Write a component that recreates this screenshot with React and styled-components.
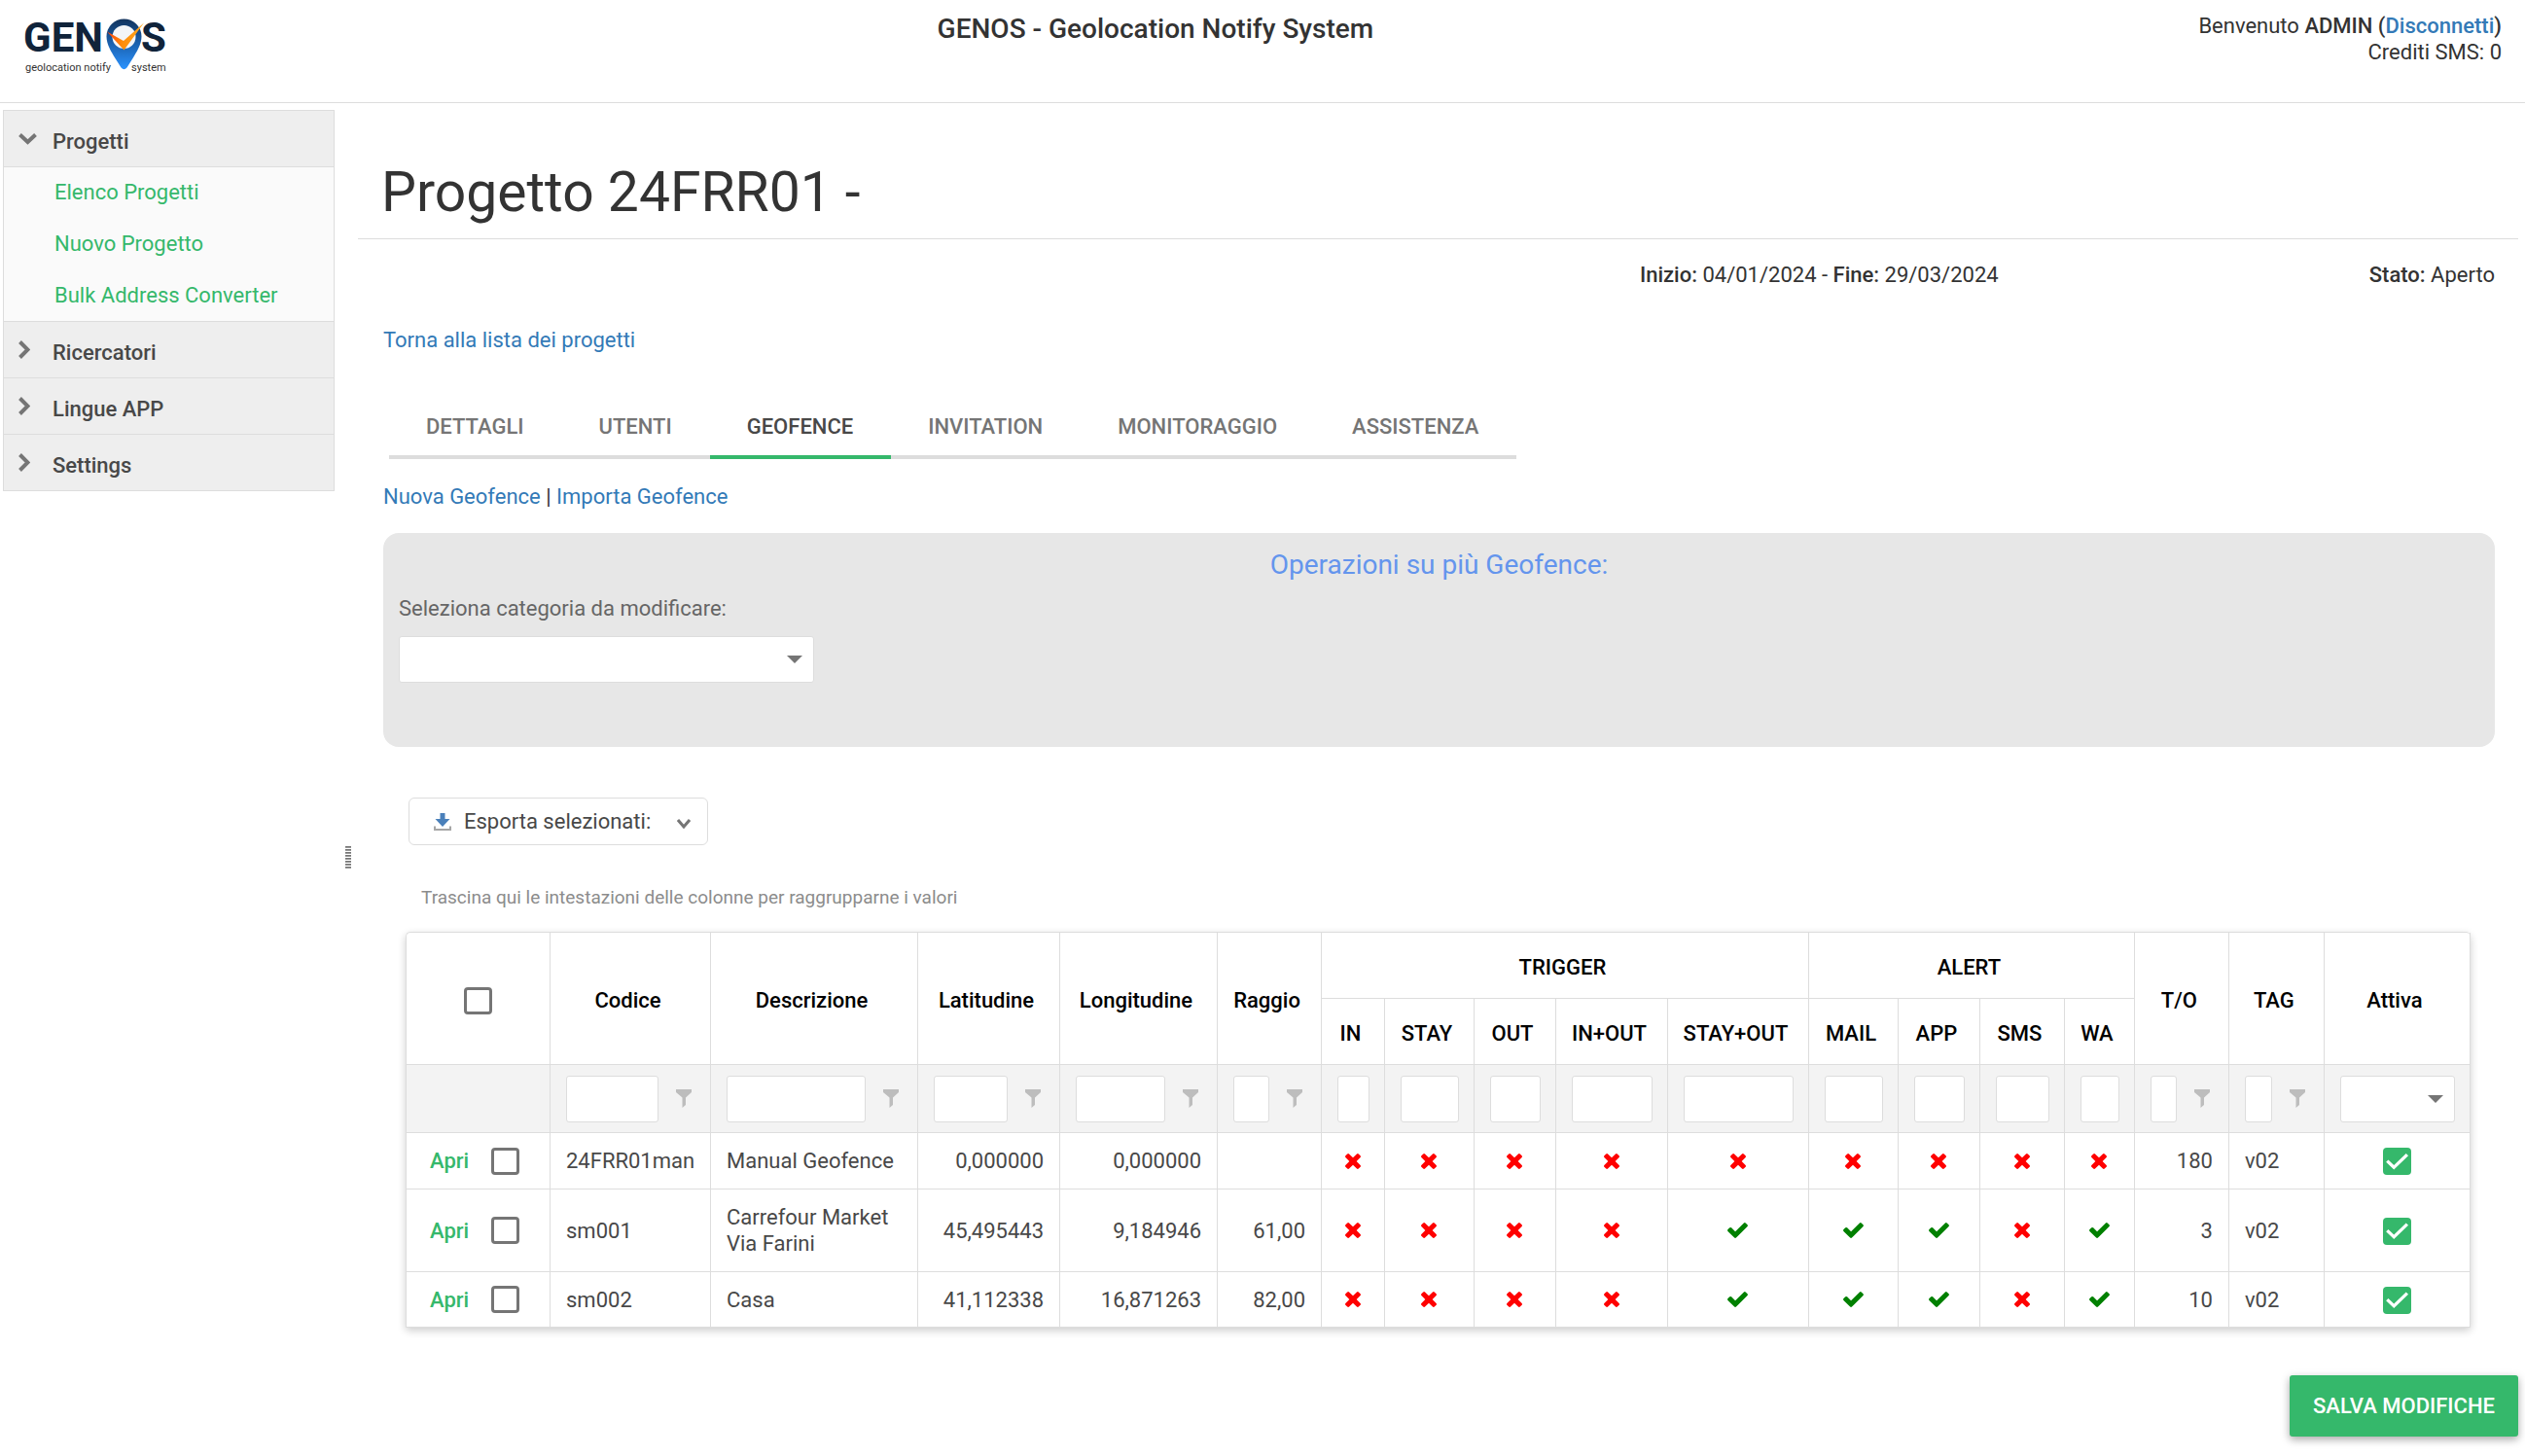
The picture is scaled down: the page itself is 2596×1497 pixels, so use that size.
import React, { useState } from "react";
import styled, { createGlobalStyle } from "styled-components";

const menu = [
  {
    title: "Progetti",
    items: ["Elenco Progetti", "Nuovo Progetto", "Bulk Address Converter"],
  },
  { title: "Ricercatori", items: [] },
  { title: "Lingue APP", items: [] },
  { title: "Settings", items: [] },
];

const tabs = [
  "DETTAGLI",
  "UTENTI",
  "GEOFENCE",
  "INVITATION",
  "MONITORAGGIO",
  "ASSISTENZA",
];

const colWidths = [
  148, 165, 213, 146, 162, 107, 65, 92, 84, 115, 145, 92, 84, 87, 72, 97, 98,
  150,
];

const triggers = ["IN", "STAY", "OUT", "IN+OUT", "STAY+OUT"];
const alerts = ["MAIL", "APP", "SMS", "WA"];

const filters = [
  { label: "Codice", funnel: true },
  { label: "Descrizione", funnel: true },
  { label: "Latitudine", funnel: true },
  { label: "Longitudine", funnel: true },
  { label: "Raggio", funnel: true },
  ...[...triggers, ...alerts].map((label) => ({ label })),
  { label: "T/O", funnel: true },
  { label: "TAG", funnel: true },
];

const geofences = [
  {
    code: "24FRR01man",
    description: "Manual Geofence",
    lat: "0,000000",
    lng: "0,000000",
    radius: "",
    flags: [0, 0, 0, 0, 0, 0, 0, 0, 0],
    timeout: 180,
    tag: "v02",
    height: 58,
  },
  {
    code: "sm001",
    description: "Carrefour Market Via Farini",
    lat: "45,495443",
    lng: "9,184946",
    radius: "61,00",
    flags: [0, 0, 0, 0, 1, 1, 1, 0, 1],
    timeout: 3,
    tag: "v02",
    height: 85,
  },
  {
    code: "sm002",
    description: "Casa",
    lat: "41,112338",
    lng: "16,871263",
    radius: "82,00",
    flags: [0, 0, 0, 0, 1, 1, 1, 0, 1],
    timeout: 10,
    tag: "v02",
    height: 57,
  },
];

const Logo = () => (
  <LogoSvg width="150" height="62" viewBox="0 0 150 62" role="img" aria-label="GENOS">
    <defs>
      <linearGradient id="pin" x1="0" y1="0" x2="0" y2="1">
        <stop offset="0" stopColor="#12335c" />
        <stop offset="0.5" stopColor="#1b62b0" />
        <stop offset="1" stopColor="#2b93ff" />
      </linearGradient>
      <linearGradient id="tick" x1="0" y1="0" x2="1" y2="0">
        <stop offset="0" stopColor="#ff3d0c" />
        <stop offset="0.4" stopColor="#ff8c0a" />
        <stop offset="1" stopColor="#ffa81f" />
      </linearGradient>
    </defs>
    <LogoName x="0" y="34">GEN</LogoName>
    <LogoName x="121" y="34">S</LogoName>
    <LogoTag x="2" y="54">geolocation notify</LogoTag>
    <LogoTag x="111" y="54">system</LogoTag>
    <path
      d="M103.500 0.500a18 18 0 0 1 18 18c0 8-5 16-9 22.500l-6 9.500q-3 3.500-6 0l-6-9.500c-4-6.500-9-14.500-9-22.500a18 18 0 0 1 18-18z"
      fill="url(#pin)"
    />
    <circle cx="103.500" cy="19" r="12" fill="#f3f5f8" />
    <path d="M86 13.500l17 9.500 21-18.500-20.500 28z" fill="url(#tick)" />
  </LogoSvg>
);

const Chevron = ({ open }) =>
  open ? (
    <svg width="19" height="12" viewBox="0 0 19 12">
      <path d="M1.500 1.500l8 7.500 8-7.500" fill="none" stroke="#757575" strokeWidth="4" />
    </svg>
  ) : (
    <svg width="12" height="19" viewBox="0 0 12 19">
      <path d="M1.500 1.500l8 8-8 8" fill="none" stroke="#757575" strokeWidth="4" />
    </svg>
  );

const Funnel = () => (
  <svg width="16" height="19" viewBox="0 0 16 19">
    <path d="M0 0h16v3l-6 5.500v7.500l-3.500 3v-10.500l-6.500-5.500z" fill="#bdbdbd" />
  </svg>
);

const Flag = ({ on }) =>
  on ? (
    <svg width="21" height="16" viewBox="121 334 1550 1188" role="img" aria-label="Sì">
      <path
        fill="#008000"
        d="M1671 566q0 40-28 68l-724 724-136 136q-28 28-68 28t-68-28l-136-136-362-362q-28-28-28-68t28-68l136-136q28-28 68-28t68 28l294 295 656-657q28-28 68-28t68 28l136 136q28 28 28 68z"
      />
    </svg>
  ) : (
    <svg width="16" height="16" viewBox="302 366 1188 1188" role="img" aria-label="No">
      <path
        fill="#ff0000"
        d="M1490 1322q0 40-28 68l-136 136q-28 28-68 28t-68-28l-294-294-294 294q-28 28-68 28t-68-28l-136-136q-28-28-28-68t28-68l294-294-294-294q-28-28-28-68t28-68l136-136q28-28 68-28t68 28l294 294 294-294q28-28 68-28t68 28l136 136q28 28 28 68t-28 68l-294 294 294 294q28 28 28 68z"
      />
    </svg>
  );

const DownloadIcon = () => (
  <svg width="18" height="18" viewBox="0 0 18 18">
    <path d="M6.500 0h5v6h5l-7.500 8-7.500-8h5z" fill="#4a80ba" />
    <path d="M1 13.500v3.500h16v-3.500" fill="none" stroke="#a6a6a6" strokeWidth="2" />
  </svg>
);

const App = () => {
  const [openGroup, setOpenGroup] = useState("Progetti");
  const [tab, setTab] = useState("GEOFENCE");
  const [selected, setSelected] = useState([]);

  const toggleAll = (e) =>
    setSelected(e.target.checked ? geofences.map((g) => g.code) : []);

  const toggleRow = (code) =>
    setSelected(
      selected.includes(code)
        ? selected.filter((c) => c !== code)
        : [...selected, code]
    );

  return (
    <>
      <GlobalStyle />
      <Header>
        <Logo />
        <HeaderTitle>GENOS - Geolocation Notify System</HeaderTitle>
        <UserInfo>
          <div>
            Benvenuto{" "}
            <b>
              ADMIN (<Link href="#logout">Disconnetti</Link>)
            </b>
          </div>
          <div>Crediti SMS: 0</div>
        </UserInfo>
      </Header>
      <Layout>
        <Sidebar>
          {menu.map(({ title, items }) => (
            <div key={title}>
              <GroupButton onClick={() => setOpenGroup(title)}>
                <ChevronBox>
                  <Chevron open={openGroup === title} />
                </ChevronBox>
                <span>{title}</span>
              </GroupButton>
              {openGroup === title && items.length > 0 && (
                <SubMenu>
                  {items.map((item) => (
                    <SubLink key={item} href="#menu">
                      {item}
                    </SubLink>
                  ))}
                </SubMenu>
              )}
            </div>
          ))}
        </Sidebar>
        <Splitter>
          <Grip />
        </Splitter>
        <Main>
          <Title>Progetto 24FRR01 -</Title>
          <Content>
            <ProjectInfo>
              <Dates>
                <b>Inizio:</b> 04/01/2024 - <b>Fine:</b> 29/03/2024
              </Dates>
              <Status>
                <b>Stato:</b> Aperto
              </Status>
            </ProjectInfo>
            <BackRow>
              <Link href="#progetti">Torna alla lista dei progetti</Link>
            </BackRow>
            <Tabs role="tablist">
              {tabs.map((name) => (
                <Tab
                  key={name}
                  role="tab"
                  $active={tab === name}
                  onClick={() => setTab(name)}
                >
                  {name}
                </Tab>
              ))}
            </Tabs>
            <Actions>
              <Link href="#nuova">Nuova Geofence</Link> |{" "}
              <Link href="#importa">Importa Geofence</Link>
            </Actions>
            <BulkPanel>
              <BulkTitle>Operazioni su più Geofence:</BulkTitle>
              <BulkLabel htmlFor="categoria">
                Seleziona categoria da modificare:
              </BulkLabel>
              <SelectBox $width="427px">
                <Select id="categoria" />
              </SelectBox>
            </BulkPanel>
            <GridArea>
              <ExportButton>
                <DownloadIcon />
                <span>Esporta selezionati:</span>
                <svg width="14" height="14" viewBox="0 0 14 14">
                  <path d="M1 5l6 7 6-7" fill="none" stroke="#757575" strokeWidth="3" />
                </svg>
              </ExportButton>
              <GroupHint>
                Trascina qui le intestazioni delle colonne per raggrupparne i
                valori
              </GroupHint>
              <Table>
                <colgroup>
                  {colWidths.map((w, i) => (
                    <col key={i} style={{ width: `${(w / 2122) * 100}%` }} />
                  ))}
                </colgroup>
                <thead>
                  <HeadRow>
                    <HeadCell rowSpan={2} $plain>
                      <Checkbox
                        aria-label="Seleziona tutti"
                        checked={selected.length === geofences.length}
                        onChange={toggleAll}
                      />
                    </HeadCell>
                    <HeadCell rowSpan={2}>Codice</HeadCell>
                    <HeadCell rowSpan={2}>Descrizione</HeadCell>
                    <HeadCell rowSpan={2}>Latitudine</HeadCell>
                    <HeadCell rowSpan={2}>Longitudine</HeadCell>
                    <HeadCell rowSpan={2}>Raggio</HeadCell>
                    <HeadCell colSpan={5}>TRIGGER</HeadCell>
                    <HeadCell colSpan={4}>ALERT</HeadCell>
                    <HeadCell rowSpan={2}>T/O</HeadCell>
                    <HeadCell rowSpan={2}>TAG</HeadCell>
                    <HeadCell rowSpan={2}>Attiva</HeadCell>
                  </HeadRow>
                  <HeadRow>
                    {[...triggers, ...alerts].map((name) => (
                      <HeadCell key={name}>{name}</HeadCell>
                    ))}
                  </HeadRow>
                  <FilterRow>
                    <FilterCell />
                    {filters.map(({ label, funnel }) => (
                      <FilterCell key={label}>
                        <FilterBox>
                          <FilterInput type="text" aria-label={`Filtro ${label}`} />
                          {funnel && <Funnel />}
                        </FilterBox>
                      </FilterCell>
                    ))}
                    <FilterCell>
                      <SelectBox $width="100%">
                        <Select aria-label="Filtro Attiva" />
                      </SelectBox>
                    </FilterCell>
                  </FilterRow>
                </thead>
                <tbody>
                  {geofences.map((g) => (
                    <BodyRow key={g.code} $height={g.height}>
                      <Cell>
                        <RowTools>
                          <OpenLink href="#apri">Apri</OpenLink>
                          <Checkbox
                            aria-label={`Seleziona ${g.code}`}
                            checked={selected.includes(g.code)}
                            onChange={() => toggleRow(g.code)}
                          />
                        </RowTools>
                      </Cell>
                      <Cell>{g.code}</Cell>
                      <Cell>{g.description}</Cell>
                      <Cell $align="right">{g.lat}</Cell>
                      <Cell $align="right">{g.lng}</Cell>
                      <Cell $align="right">{g.radius}</Cell>
                      {g.flags.map((on, i) => (
                        <Cell key={i} $align="center">
                          <Flag on={on} />
                        </Cell>
                      ))}
                      <Cell $align="right">{g.timeout}</Cell>
                      <Cell>{g.tag}</Cell>
                      <Cell $align="center">
                        <Checkbox aria-label={`Attiva ${g.code}`} defaultChecked />
                      </Cell>
                    </BodyRow>
                  ))}
                </tbody>
              </Table>
            </GridArea>
          </Content>
          <SaveButton>SALVA MODIFICHE</SaveButton>
        </Main>
      </Layout>
    </>
  );
};

// styled components

const GlobalStyle = createGlobalStyle`
  * {
    box-sizing: border-box;
  }
  body {
    margin: 0;
    background: #fff;
    color: #333;
    font-family: Roboto, "Liberation Sans", sans-serif;
    font-size: 22px;
    line-height: 27px;
  }
  button, input, select {
    font: inherit;
    color: inherit;
  }
  svg {
    display: block;
    flex: none;
  }
`;

const Header = styled.header`
  display: grid;
  grid-template-columns: 21fr 32fr 28fr;
  height: 106px;
  padding: 13px 24px;
  border-bottom: 1px solid #ddd;
`;

const LogoSvg = styled.svg`
  margin-top: 6px;
  overflow: visible;
`;

const LogoName = styled.text`
  font-family: Roboto, "Liberation Sans", sans-serif;
  font-size: 42px;
  font-weight: 700;
  fill: #10233a;
`;

const LogoTag = styled.text`
  font-family: Roboto, "Liberation Sans", sans-serif;
  font-size: 11px;
  fill: #333;
`;

const HeaderTitle = styled.div`
  font-size: 28px;
  line-height: 34px;
  font-weight: 500;
  text-align: center;
`;

const UserInfo = styled.div`
  text-align: right;
  b {
    font-weight: 500;
  }
`;

const Link = styled.a`
  color: #337ab7;
  text-decoration: none;
`;

const Layout = styled.div`
  display: grid;
  grid-template-columns: 341px 24px 1fr;
  padding: 0 7px 0 3px;
`;

const Sidebar = styled.nav`
  align-self: start;
  margin-top: 7px;
  border: 1px solid #ddd;
  border-bottom: 0;
`;

const GroupButton = styled.button`
  display: flex;
  align-items: center;
  width: 100%;
  height: 58px;
  padding: 0 15px;
  border: 0;
  border-bottom: 1px solid #ddd;
  background: #eee;
  color: #484848;
  font-weight: 500;
  text-align: left;
  span:last-child {
    padding-top: 6px;
  }
`;

const ChevronBox = styled.span`
  width: 35px;
`;

const SubMenu = styled.div`
  display: grid;
  gap: 1px;
  background: #fafafa;
  border-bottom: 1px solid #ddd;
`;

const SubLink = styled.a`
  padding-left: 52px;
  color: #35b86b;
  line-height: 52px;
  text-decoration: none;
`;

const Splitter = styled.div`
  padding: 764px 0 0 11px;
`;

const Grip = styled.div`
  width: 6px;
  height: 23px;
  background: repeating-linear-gradient(
    #757575 0 1px,
    #999 1px 2px,
    #fff 2px 3px
  );
`;

const Main = styled.main`
  display: flex;
  flex-direction: column;
  min-width: 0;
`;

const Title = styled.h1`
  margin: 0;
  padding: 60px 24px 15px;
  border-bottom: 1px solid #ddd;
  font-size: 57px;
  line-height: 64px;
  font-weight: 400;
`;

const Content = styled.div`
  padding: 0 24px 0 26px;
`;

const ProjectInfo = styled.div`
  display: grid;
  grid-template-columns: 50fr 36fr 14fr;
  line-height: 74px;
  b {
    font-weight: 500;
  }
`;

const Dates = styled.div`
  grid-column: 2;
  text-align: center;
`;

const Status = styled.div`
  text-align: right;
`;

const BackRow = styled.div`
  line-height: 60px;
`;

const Tabs = styled.div`
  display: flex;
  margin: 28px 0 0 6px;
`;

const Tab = styled.button`
  height: 64px;
  padding: 0 39px 0 38px;
  border: 0;
  border-bottom: 4px solid ${({ $active }) => ($active ? "#35b86b" : "#ddd")};
  background: none;
  color: ${({ $active }) => ($active ? "#484848" : "#757575")};
  font-weight: 500;
`;

const Actions = styled.div`
  padding-top: 2px;
  line-height: 74px;
`;

const BulkPanel = styled.section`
  padding: 16px 16px 66px;
  border-radius: 16px;
  background: #e7e7e7;
`;

const BulkTitle = styled.div`
  color: #6495ed;
  font-size: 28px;
  line-height: 34px;
  text-align: center;
`;

const BulkLabel = styled.label`
  display: block;
  color: #666;
  line-height: 56px;
`;

const SelectBox = styled.div`
  position: relative;
  width: ${({ $width }) => $width};
  &::after {
    content: "";
    position: absolute;
    top: 20px;
    right: 12px;
    border: 8px solid transparent;
    border-top-color: #757575;
    border-bottom: 0;
    pointer-events: none;
  }
`;

const Select = styled.select`
  display: block;
  width: 100%;
  height: 48px;
  border: 1px solid #ddd;
  border-radius: 3px;
  background: #fff;
  appearance: none;
`;

const GridArea = styled.div`
  padding: 52px 25px 0 23px;
`;

const ExportButton = styled.button`
  display: flex;
  align-items: center;
  height: 49px;
  margin-left: 3px;
  padding: 0 17px 0 25px;
  border: 1px solid #ddd;
  border-radius: 6px;
  background: #fff;
  color: #484848;
  span {
    margin: 0 27px 0 13px;
  }
`;

const GroupHint = styled.div`
  padding: 18px 16px 0;
  color: #8c8c8c;
  font-size: 19px;
  line-height: 71px;
`;

const Table = styled.table`
  width: 100%;
  table-layout: fixed;
  border: solid #ddd;
  border-width: 1px 0 0 1px;
  border-spacing: 0;
  border-radius: 5px 5px 0 0;
  box-shadow: 0 3px 8px rgba(0, 0, 0, 0.2);
  color: #484848;
`;

const HeadRow = styled.tr`
  height: 68px;
`;

const HeadCell = styled.th`
  padding: ${({ $plain }) => ($plain ? "4px 0 0" : "4px 5px 0 0")};
  border: solid #ddd;
  border-width: 0 1px 1px 0;
  color: #000;
  font-weight: 500;
  white-space: nowrap;
`;

const FilterRow = styled.tr`
  height: 70px;
  background: #f3f3f3;
`;

const FilterCell = styled.td`
  padding: 0 15px 0 16px;
  border: solid #ddd;
  border-width: 0 1px 1px 0;
`;

const FilterBox = styled.div`
  display: flex;
  align-items: center;
  gap: 18px;
  svg {
    margin-right: 4px;
  }
`;

const FilterInput = styled.input`
  flex: 1;
  width: 0;
  min-width: 0;
  height: 48px;
  border: 1px solid #ddd;
  border-radius: 3px;
  background: #fff;
`;

const BodyRow = styled.tr`
  height: ${({ $height }) => $height}px;
`;

const Cell = styled.td`
  padding: 0 16px;
  border: solid #ddd;
  border-width: 0 1px 1px 0;
  text-align: ${({ $align }) => $align || "left"};
  svg {
    margin: 0 auto;
  }
`;

const RowTools = styled.div`
  display: flex;
  align-items: center;
  gap: 23px;
  padding-left: 8px;
`;

const OpenLink = styled.a`
  color: #35b86b;
  font-weight: 500;
  text-decoration: none;
`;

const Checkbox = styled.input.attrs({ type: "checkbox" })`
  display: inline-block;
  width: 29px;
  height: 28px;
  margin: 0;
  border: 3px solid #757575;
  border-radius: 4px;
  background: #fff;
  vertical-align: middle;
  appearance: none;
  &:checked {
    border: 0;
    background: #35b86b;
  }
  &:checked::before {
    content: "";
    display: block;
    height: 100%;
    background: #fff;
    clip-path: polygon(
      11% 52%,
      19% 44%,
      39% 64%,
      82% 21%,
      90% 29%,
      39% 80%
    );
  }
`;

const SaveButton = styled.button`
  align-self: flex-end;
  height: 63px;
  margin: 49px 0 20px;
  padding: 0 24px;
  border: 0;
  border-radius: 3px;
  background: #35b86b;
  box-shadow: 0 3px 8px rgba(0, 0, 0, 0.35);
  color: #fff;
  font-weight: 500;
`;

export default App;
